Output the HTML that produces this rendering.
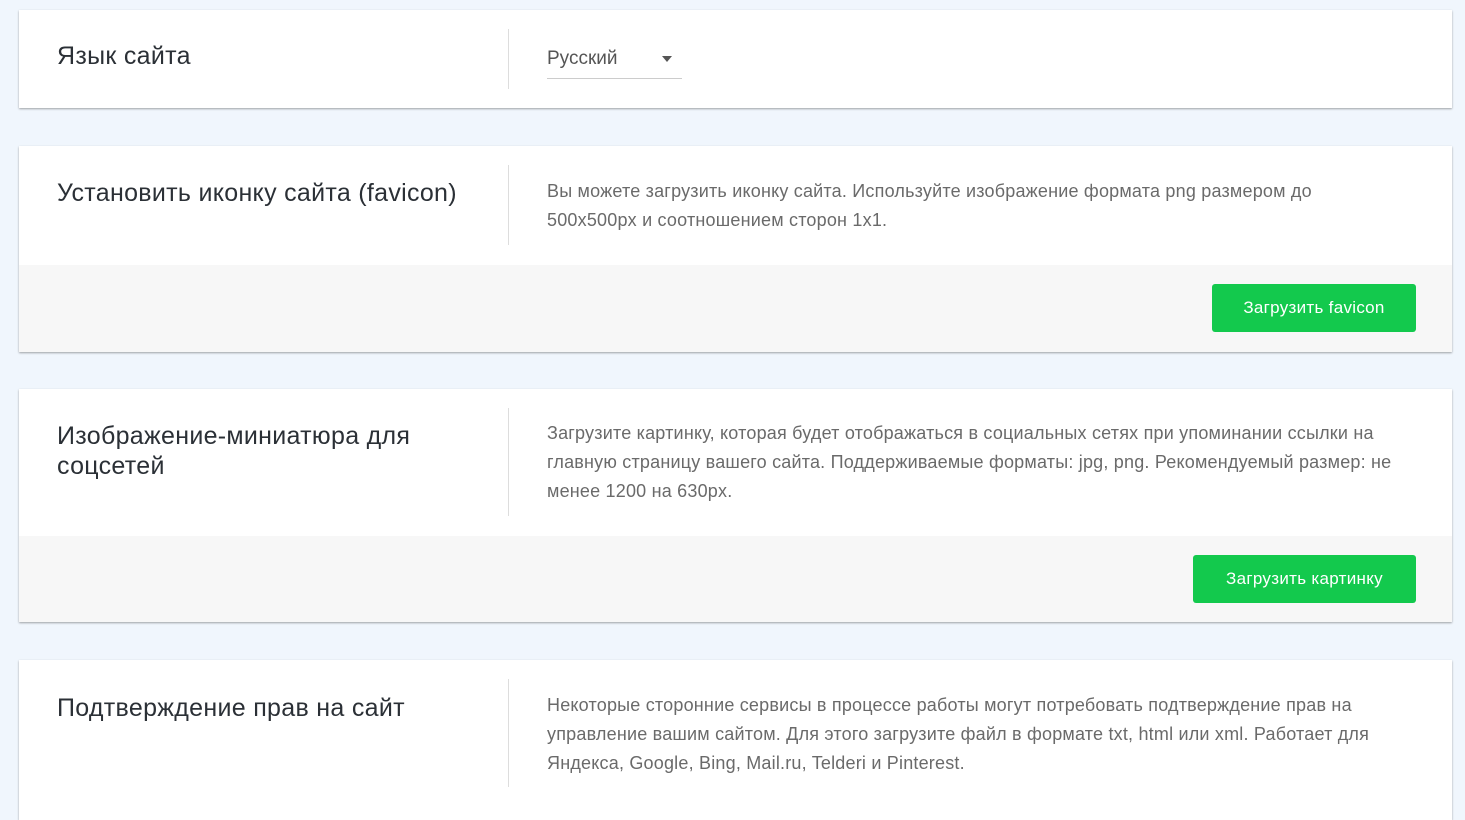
<!DOCTYPE html>
<html><head><meta charset="utf-8"><style>
body{margin:0;background:#f0f6fd;font-family:"Liberation Sans",sans-serif;width:1465px;height:807px;overflow:hidden;position:relative}
.card{position:absolute;left:19px;width:1433px;background:#fff;box-shadow:0 1px 2px rgba(0,0,0,.35)}
.t{position:absolute;left:38px;font-size:25px;color:#2b3036;line-height:30px;letter-spacing:.3px}
.d{position:absolute;left:489px;width:32px;border-left:1px solid #ddd}
.p{position:absolute;left:528px;width:850px;font-size:18px;color:#6a6a6a;line-height:29px;letter-spacing:.2px}
.f{position:absolute;left:0;right:0;bottom:0;background:#f7f7f7}
.b{position:absolute;right:36px;top:19px;height:48px;background:#13c94d;color:#fff;font-size:17px;line-height:48px;text-align:center;border-radius:3px;letter-spacing:.3px}
</style></head><body>
<div class="card" style="top:10px;height:98px">
<div class="t" style="top:31px">Язык сайта</div>
<div class="d" style="top:19px;height:60px"></div>
<div style="position:absolute;left:528px;top:38px;width:135px;height:30px;border-bottom:1px solid #ccc;font-size:19px;color:#555">Русский<span style="position:absolute;right:10px;top:8px;border:5px solid transparent;border-top:6px solid #555"></span></div>
</div>
<div class="card" style="top:146px;height:206px">
<div class="t" style="top:32px">Установить иконку сайта (favicon)</div>
<div class="d" style="top:19px;height:80px"></div>
<div class="p" style="top:31px">Вы можете загрузить иконку сайта. Используйте изображение формата png размером до 500x500px и соотношением сторон 1x1.</div>
<div class="f" style="height:87px"><div class="b" style="width:204px">Загрузить favicon</div></div>
</div>
<div class="card" style="top:389px;height:233px">
<div class="t" style="top:32px;width:420px">Изображение-миниатюра для соцсетей</div>
<div class="d" style="top:19px;height:108px"></div>
<div class="p" style="top:30px">Загрузите картинку, которая будет отображаться в социальных сетях при упоминании ссылки на главную страницу вашего сайта. Поддерживаемые форматы: jpg, png. Рекомендуемый размер: не менее 1200 на 630px.</div>
<div class="f" style="height:86px"><div class="b" style="width:223px">Загрузить картинку</div></div>
</div>
<div class="card" style="top:660px;height:160px">
<div class="t" style="top:33px">Подтверждение прав на сайт</div>
<div class="d" style="top:19px;height:108px"></div>
<div class="p" style="top:31px">Некоторые сторонние сервисы в процессе работы могут потребовать подтверждение прав на управление вашим сайтом. Для этого загрузите файл в формате txt, html или xml. Работает для Яндекса, Google, Bing, Mail.ru, Telderi и Pinterest.</div>
</div>
</body></html>
